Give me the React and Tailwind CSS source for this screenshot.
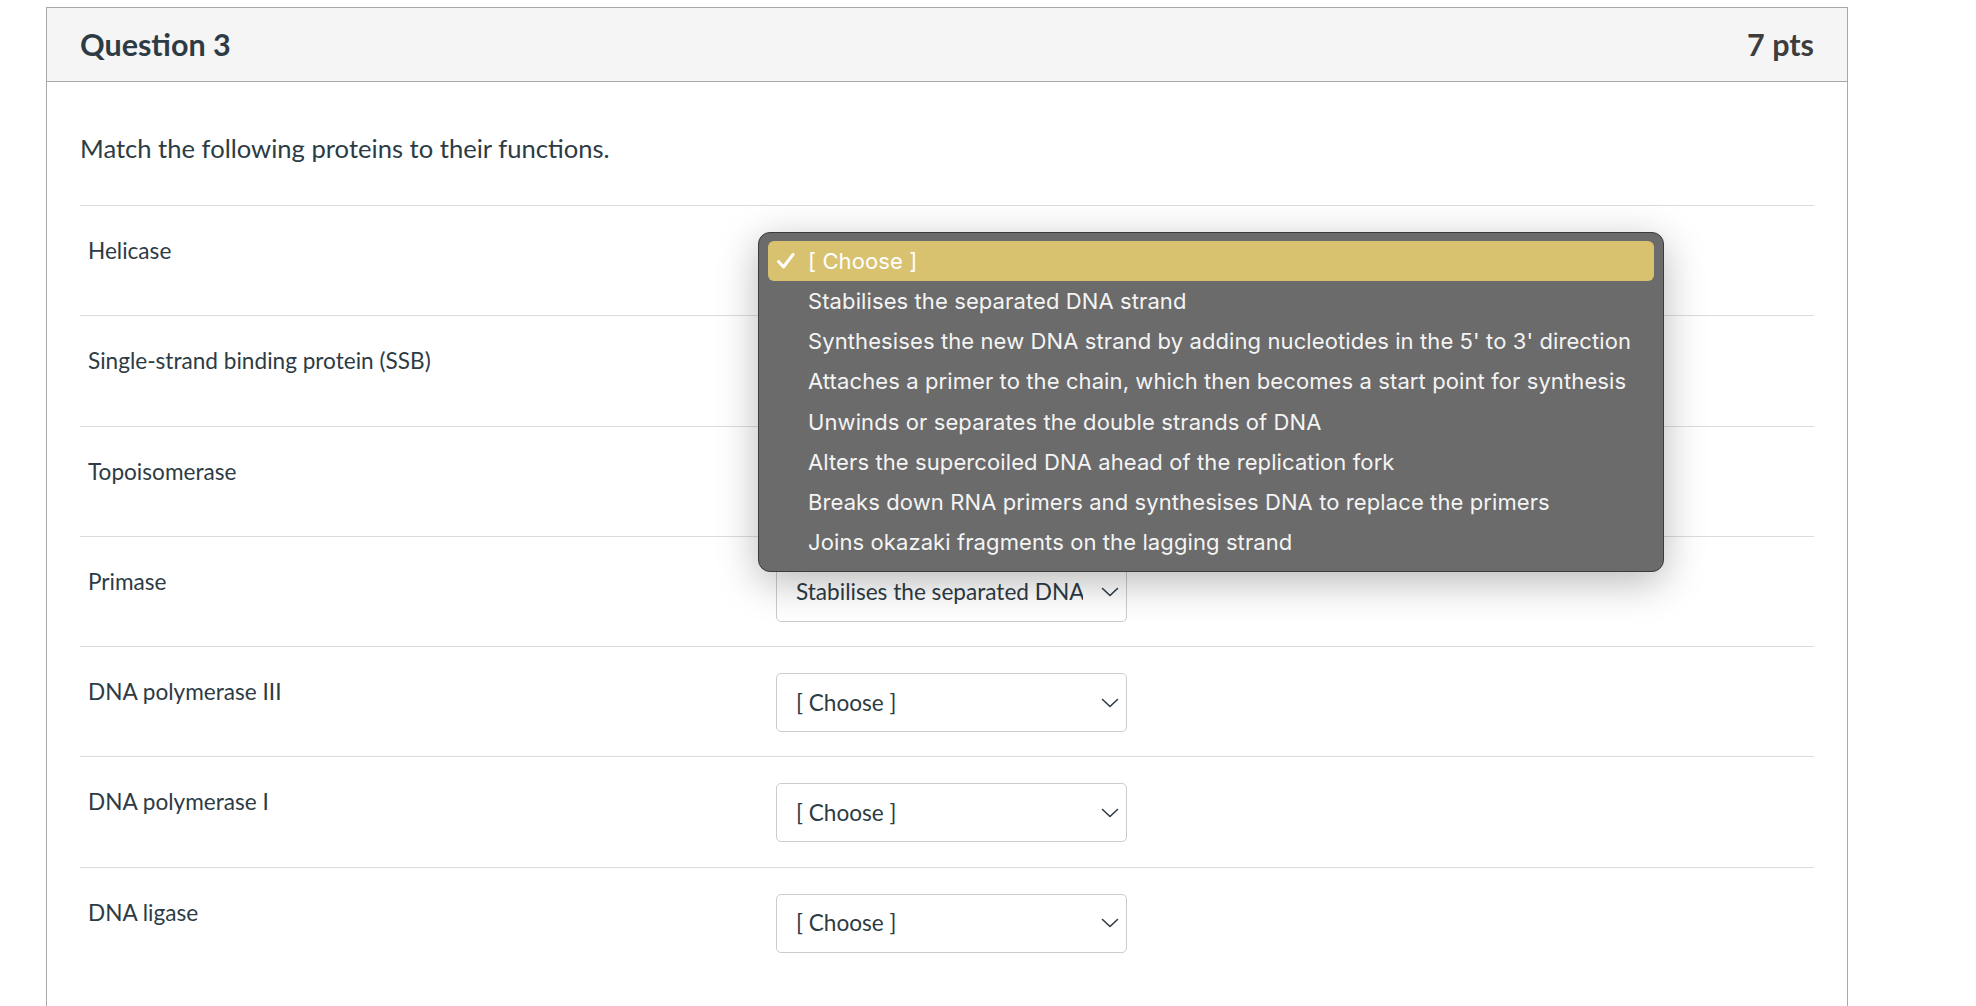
import React from 'react';

const rows = [
  { label: 'Helicase', value: '[ Choose ]' },
  { label: 'Single-strand binding protein (SSB)', value: '[ Choose ]' },
  { label: 'Topoisomerase', value: '[ Choose ]' },
  { label: 'Primase', value: 'Stabilises the separated DNA strand' },
  { label: 'DNA polymerase III', value: '[ Choose ]' },
  { label: 'DNA polymerase I', value: '[ Choose ]' },
  { label: 'DNA ligase', value: '[ Choose ]' },
];

const options = [
  'Stabilises the separated DNA strand',
  "Synthesises the new DNA strand by adding nucleotides in the 5' to 3' direction",
  'Attaches a primer to the chain, which then becomes a start point for synthesis',
  'Unwinds or separates the double strands of DNA',
  'Alters the supercoiled DNA ahead of the replication fork',
  'Breaks down RNA primers and synthesises DNA to replace the primers',
  'Joins okazaki fragments on the lagging strand',
];

const Chevron = () => (
  <svg width="18" height="10" viewBox="0 0 18 10" fill="none" className="shrink-0">
    <path d="M1.5 1.5 L9 8.5 L16.5 1.5" stroke="#2d3b45" strokeWidth="1.6" strokeLinecap="round" strokeLinejoin="round" />
  </svg>
);

const FakeSelect = ({ value }) => (
  <div className="w-[351px] h-[59px] mt-[26px] flex items-center justify-between bg-white border border-[#c7cdd1] rounded-[5px] pl-[19px] pr-[7px]">
    <span className="overflow-hidden whitespace-nowrap text-[22.6px] leading-[34px] text-[#2d3b45] mr-[18px]">{value}</span>
    <Chevron />
  </div>
);

const OptionsMenu = () => (
  <div className="absolute left-[711px] top-[224px] w-[906px] h-[340px] rounded-[12px] bg-[#6b6b6b] border border-[#3c3c3c] shadow-[0_10px_40px_rgba(0,0,0,0.28)] pt-[8px] px-[9px] font-['Inter',sans-serif]">
    <div className="h-[40px] flex items-center rounded-[6px] bg-[#d9c26f] text-white pl-[8px]">
      <svg width="20" height="18" viewBox="0 0 20 18" fill="none" className="mr-[12px]">
        <path d="M2.5 9.5 L7.5 15 L17 2.5" stroke="#ffffff" strokeWidth="3" strokeLinecap="round" strokeLinejoin="round" />
      </svg>
      <span className="text-[22px] tracking-[0.1px]">[ Choose ]</span>
    </div>
    {options.map((o) => (
      <div key={o} className="h-[40.3px] flex items-center pl-[40px] text-[22px] tracking-[0.1px] text-[#f4f4f4] whitespace-nowrap">
        {o}
      </div>
    ))}
  </div>
);

export default function App() {
  return (
    <div className="min-h-screen bg-white pt-[7px] pl-[46px] font-['Lato',sans-serif] text-[#2d3b45]">
      <div className="relative w-[1802px] border border-[#a9a9a9] border-b-0 bg-white">
        <div className="h-[74px] flex items-center justify-between bg-[#f5f5f5] border-b border-[#a9a9a9] pl-[33px] pr-[33px]">
          <h2 className="text-[30.5px] font-bold leading-none">Question 3</h2>
          <span className="text-[30.5px] font-bold leading-none text-[#3d3d3d]">7 pts</span>
        </div>
        <div className="px-[33px] pt-[48px] pb-[40px]">
          <p className="text-[25.6px] leading-[36px] mb-[39px]">Match the following proteins to their functions.</p>
          <div>
            {rows.map((r) => (
              <div key={r.label} className="h-[110.3px] border-t border-[#dcdcdc] flex items-start">
                <div className="w-[696px] pl-[8px] pt-[28px] text-[22.6px] leading-[34px]">{r.label}</div>
                <FakeSelect value={r.value} />
              </div>
            ))}
          </div>
        </div>
        <OptionsMenu />
      </div>
    </div>
  );
}
